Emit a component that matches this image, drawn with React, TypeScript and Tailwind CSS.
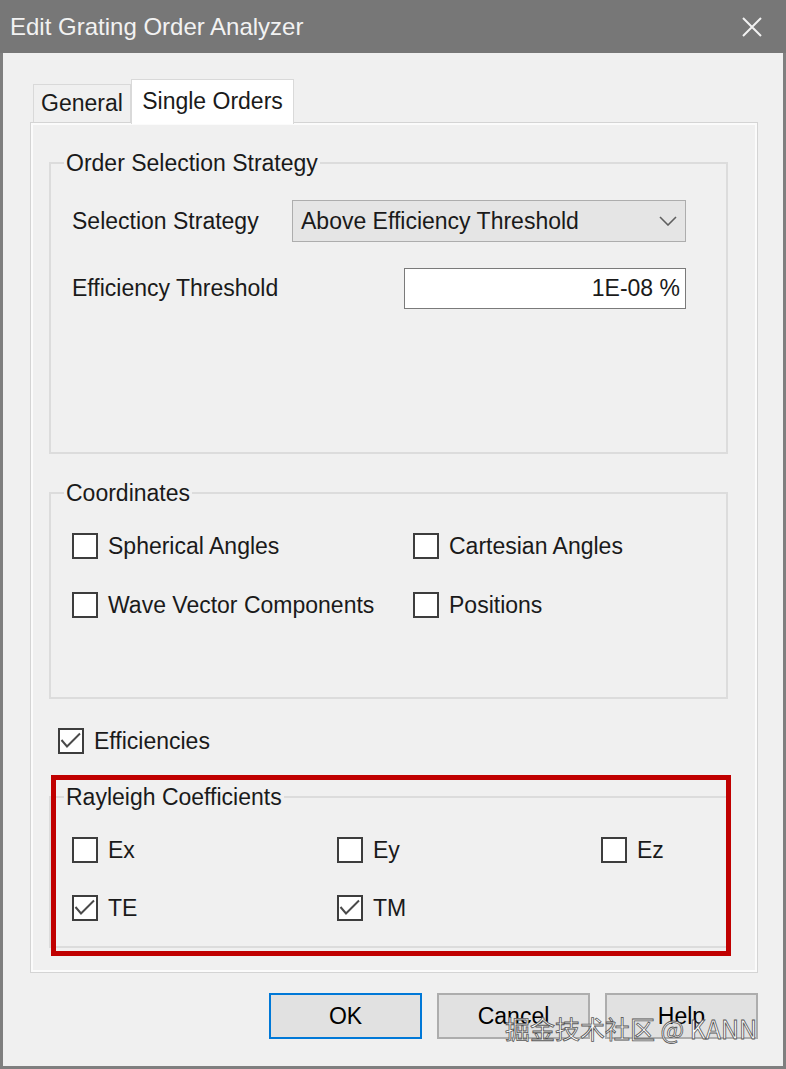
// Edit Grating Order Analyzer — "Single Orders" tab of a Windows-style dialog

import type { ReactNode } from 'react';

// ============================================
// Small pieces
// ============================================

function CloseGlyph() {
  return (
    <svg width="22" height="22" viewBox="0 0 22 22" fill="none">
      <path d="M2 2 L20 20 M20 2 L2 20" stroke="#f2f2f2" strokeWidth="2" />
    </svg>
  );
}

function Chevron() {
  return (
    <svg width="18" height="10" viewBox="0 0 18 10" fill="none">
      <path d="M1 1 L9 9 L17 1" stroke="#5f5f5f" strokeWidth="1.6" />
    </svg>
  );
}

interface CheckBoxProps {
  label: string;
  checked?: boolean;
  className?: string;
}

function CheckBox({ label, checked = false, className = '' }: CheckBoxProps) {
  return (
    <div className={`flex items-center gap-[10px] h-[26px] ${className}`}>
      <span className="flex w-[26px] h-[26px] shrink-0 border-2 border-[#3d3d3d] bg-white">
        {checked && (
          <svg width="22" height="22" viewBox="0 0 22 22" fill="none">
            <path d="M1.5 10 L7 16.5 L20 3.5" stroke="#4a4a4a" strokeWidth="2" />
          </svg>
        )}
      </span>
      <span className="leading-[26px]">{label}</span>
    </div>
  );
}

interface GroupBoxProps {
  title: string;
  className?: string;
  children: ReactNode;
}

// legend sits after the fieldset's left padding (21px), so pull it back
function GroupBox({ title, className = '', children }: GroupBoxProps) {
  return (
    <fieldset className={`border-2 border-[#dcdcdc] ${className}`}>
      <legend className="-ml-[8px] px-[2px] leading-[24px]">{title}</legend>
      {children}
    </fieldset>
  );
}

function DialogButton({ label, primary = false }: { label: string; primary?: boolean }) {
  return (
    <button
      type="button"
      className={`w-[153px] h-[46px] border-2 bg-[#e1e1e1] text-black text-[23px] ${
        primary ? 'border-[#0078d7]' : 'border-[#adadad]'
      }`}
    >
      {label}
    </button>
  );
}

// ============================================
// Dialog
// ============================================

export default function App() {
  return (
    <div className="relative w-[786px] h-[1069px] overflow-hidden flex flex-col bg-[#f0f0f0] text-[#1a1a1a] text-[23px] font-['Liberation_Sans',Arial,sans-serif]">
      {/* Title bar */}
      <div className="h-[53px] shrink-0 bg-[#777777] flex items-center justify-between pl-[10px] pr-[23px]">
        <span className="text-[24px] text-[#f2f2f2]">Edit Grating Order Analyzer</span>
        <CloseGlyph />
      </div>

      {/* Body */}
      <div className="flex-1 flex flex-col border-x-[3px] border-b-[3px] border-[#7f7f7f] pl-[27px] pt-[26px]">
        {/* Tabs */}
        <div className="flex items-end pl-[3px]">
          <div className="w-[98px] h-[38px] border border-b-0 border-[#d9d9d9] bg-[#f0f0f0] flex items-center justify-center">
            General
          </div>
          <div className="relative z-10 w-[163px] h-[45px] -mb-[2px] border border-b-0 border-[#d9d9d9] bg-white flex items-center justify-center pb-[2px]">
            Single Orders
          </div>
        </div>

        {/* Tab page */}
        <div className="w-[728px] border border-[#d4d4d4] shadow-[inset_0_0_0_2px_#fbfbfb] pt-[28px] pl-[18px] pr-[29px] pb-[24px]">
          <GroupBox title="Order Selection Strategy" className="h-[303px] pt-[25px] pl-[21px] pr-[40px]">
            <div className="flex items-center justify-between h-[42px]">
              <span>Selection Strategy</span>
              <div className="w-[394px] h-[42px] border border-[#adadad] bg-[#e5e5e5] flex items-center justify-between pl-[8px] pr-[8px]">
                <span>Above Efficiency Threshold</span>
                <Chevron />
              </div>
            </div>
            <div className="mt-[26px] flex items-center justify-between h-[41px]">
              <span>Efficiency Threshold</span>
              <div className="w-[282px] h-[41px] border border-[#7a7a7a] bg-white flex items-center justify-end pr-[5px]">
                1E-08 %
              </div>
            </div>
          </GroupBox>

          <GroupBox title="Coordinates" className="mt-[27px] h-[218px] pt-[28px] pl-[21px]">
            <div className="grid grid-cols-[341px_1fr] gap-y-[33px]">
              <CheckBox label="Spherical Angles" />
              <CheckBox label="Cartesian Angles" />
              <CheckBox label="Wave Vector Components" />
              <CheckBox label="Positions" />
            </div>
          </GroupBox>

          <CheckBox label="Efficiencies" checked className="mt-[29px] ml-[9px]" />

          <div className="relative mt-[31px]">
            <GroupBox title="Rayleigh Coefficients" className="h-[163px] pt-[28px] pl-[21px]">
              <div className="grid grid-cols-[265px_264px_1fr] gap-y-[32px]">
                <CheckBox label="Ex" />
                <CheckBox label="Ey" />
                <CheckBox label="Ez" />
                <CheckBox label="TE" checked />
                <CheckBox label="TM" checked />
              </div>
            </GroupBox>
            {/* Red highlight drawn over the group */}
            <div className="absolute left-[2px] -top-[10px] w-[680px] h-[181px] border-[5px] border-[#c00000] pointer-events-none" />
          </div>
        </div>

        {/* Buttons */}
        <div className="w-[728px] mt-[20px] flex justify-end gap-[15px]">
          <DialogButton label="OK" primary />
          <DialogButton label="Cancel" />
          <DialogButton label="Help" />
        </div>
      </div>

      {/* Watermark (overlaps the buttons, as in the screenshot) */}
      <div className="absolute left-[505px] top-[1012px] text-[25px] leading-[32px] text-white font-['Noto_Sans_CJK_SC',sans-serif] [-webkit-text-stroke:0.8px_#555]">
        掘金技术社区 @ KANN
      </div>
    </div>
  );
}
